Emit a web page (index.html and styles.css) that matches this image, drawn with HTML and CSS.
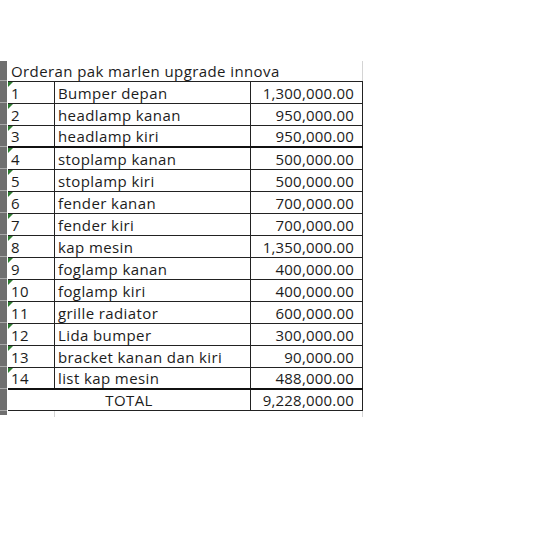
FILE: index.html
```html
<!DOCTYPE html>
<html lang="id">

<head>
  <meta charset="UTF-8">
  <title>Orderan pak marlen</title>
  <link rel="stylesheet" href="styles.css">
</head>

<body>
  <div class="sheet">
    <div class="row-heads"></div>
    <div class="grid">
      <div class="title">Orderan pak marlen upgrade innova</div>
      <table class="order">
        <tr><td class="no">1</td><td>Bumper depan</td><td class="price">1,300,000.00</td></tr>
        <tr><td class="no">2</td><td>headlamp kanan</td><td class="price">950,000.00</td></tr>
        <tr class="thick"><td class="no">3</td><td>headlamp kiri</td><td class="price">950,000.00</td></tr>
        <tr><td class="no">4</td><td>stoplamp kanan</td><td class="price">500,000.00</td></tr>
        <tr><td class="no">5</td><td>stoplamp kiri</td><td class="price">500,000.00</td></tr>
        <tr><td class="no">6</td><td>fender kanan</td><td class="price">700,000.00</td></tr>
        <tr><td class="no">7</td><td>fender kiri</td><td class="price">700,000.00</td></tr>
        <tr><td class="no">8</td><td>kap mesin</td><td class="price">1,350,000.00</td></tr>
        <tr><td class="no">9</td><td>foglamp kanan</td><td class="price">400,000.00</td></tr>
        <tr><td class="no">10</td><td>foglamp kiri</td><td class="price">400,000.00</td></tr>
        <tr><td class="no">11</td><td>grille radiator</td><td class="price">600,000.00</td></tr>
        <tr><td class="no">12</td><td>Lida bumper</td><td class="price">300,000.00</td></tr>
        <tr><td class="no">13</td><td>bracket kanan dan kiri</td><td class="price">90,000.00</td></tr>
        <tr class="thick"><td class="no">14</td><td>list kap mesin</td><td class="price">488,000.00</td></tr>
        <tr class="total"><td colspan="2">TOTAL</td><td class="price">9,228,000.00</td></tr>
      </table>
      <div class="gridlines"><span></span><span></span></div>
    </div>
  </div>
</body>

</html>
```

FILE: styles.css
```css
body {
  margin: 0;
  background: #fff;
  font-family: "Open Sans", Lato, sans-serif;
  font-size: 15px;
  letter-spacing: 0.4px;
  color: #1c1c1c;
}

.sheet {
  display: flex;
  margin-top: 61px;
}

.row-heads {
  width: 7px;
  margin-right: 1px;
  height: 354px;
  background: linear-gradient(to bottom, #6f6f6f 0, #6f6f6f 19px, #a9a9a9 19px, #a9a9a9 20px, transparent 20px),
    repeating-linear-gradient(to bottom, #6f6f6f 0, #6f6f6f 21px, #a9a9a9 21px, #a9a9a9 22px) 0 20px / 7px 334px no-repeat;
}

.grid {
  width: 355px;
}

.title {
  height: 20px;
  line-height: 20px;
  padding-left: 3px;
  border-right: 1px solid #d4d4d4;
}

.order {
  border-collapse: collapse;
  width: 355px;
  table-layout: fixed;
}

.order td {
  height: 21px;
  padding: 0 3px;
  border: 1px solid #222;
  line-height: 20px;
  white-space: nowrap;
}

.order td:first-child {
  border-left: none;
  width: 40px;
}

.order td:nth-child(2) {
  width: 189px;
}

.order td.no {
  position: relative;
}

.order td.no::before {
  content: "";
  position: absolute;
  left: 0;
  top: 0;
  border-top: 5px solid #2f7d32;
  border-right: 5px solid transparent;
}

.order td.price {
  text-align: right;
  padding-right: 8px;
  letter-spacing: 0.2px;
}

.order tr.thick td {
  height: 20px;
  border-bottom: 2px solid #111;
}

.order tr.total td {
  height: 19px;
  border-left: none;
  text-align: center;
}

.order tr.total td.price {
  border-left: 1px solid #222;
  text-align: right;
}

.gridlines {
  display: flex;
  height: 6px;
}

.gridlines span {
  border-right: 1px solid #d4d4d4;
}

.gridlines span:first-child {
  width: 46px;
}

.gridlines span:last-child {
  width: 307px;
  margin-left: 1px;
}
```
